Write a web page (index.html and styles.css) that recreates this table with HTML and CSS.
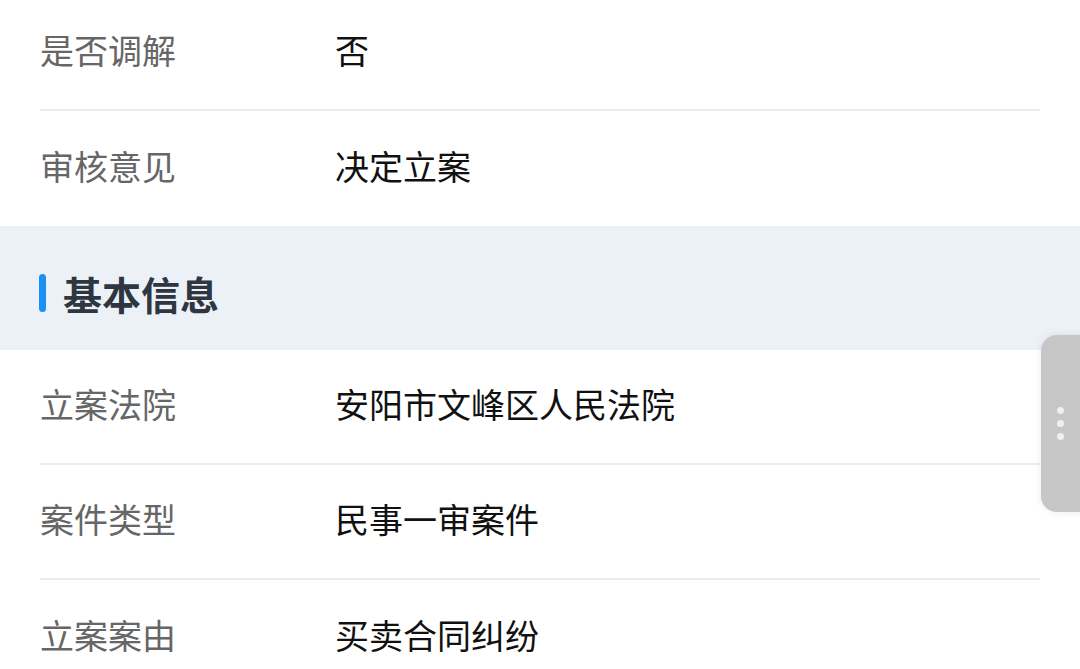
FILE: index.html
```html
<!DOCTYPE html>
<html lang="zh-CN">
<head>
<meta charset="utf-8">
<link rel="stylesheet" href="styles.css">
</head>
<body>
<div class="page">
  <div class="list first">
    <div class="row line"><span class="label">是否调解</span><span class="value">否</span></div>
    <div class="row"><span class="label">审核意见</span><span class="value">决定立案</span></div>
  </div>
  <div class="section"><span class="bar"></span><span class="title">基本信息</span></div>
  <div class="list">
    <div class="row line"><span class="label">立案法院</span><span class="value">安阳市文峰区人民法院</span></div>
    <div class="row line"><span class="label">案件类型</span><span class="value">民事一审案件</span></div>
    <div class="row"><span class="label">立案案由</span><span class="value">买卖合同纠纷</span></div>
  </div>
</div>
<div class="handle"><span class="dot"></span><span class="dot"></span><span class="dot"></span></div>
</body>
</html>
```
FILE: styles.css
```css
html, body {
  margin: 0;
  padding: 0;
  background: #ffffff;
  font-family: "Noto Sans CJK SC", "Noto Sans", sans-serif;
  overflow: hidden;
}
.page {
  width: 1080px;
  height: 669px;
  overflow: hidden;
}
.list {
  padding: 0 40px;
}
.list.first {
  margin-top: -4px;
}
.row {
  height: 115px;
  box-sizing: border-box;
  display: flex;
  align-items: center;
  font-size: 34px;
  padding-bottom: 6px;
}
.row.line {
  border-bottom: 2px solid #ececec;
}
.label {
  width: 295px;
  flex: none;
  color: #666666;
}
.value {
  color: #111111;
}
.section {
  height: 124px;
  background: #ecf1f7;
  display: flex;
  align-items: center;
  padding-left: 39px;
  padding-top: 9px;
  box-sizing: border-box;
}
.bar {
  width: 7px;
  height: 38px;
  border-radius: 4px;
  background: #1890f5;
  margin-right: 17px;
}
.title {
  font-size: 39px;
  font-weight: 700;
  color: #2e3641;
}
.handle {
  position: absolute;
  left: 1041px;
  top: 335px;
  width: 60px;
  height: 177px;
  border-radius: 16px;
  background: #c6c6c6;
  box-shadow: 0 0 8px rgba(0,0,0,0.08);
  display: flex;
  flex-direction: column;
  padding-left: 16px;
  box-sizing: border-box;
  justify-content: center;
  gap: 6px;
}
.dot {
  width: 7px;
  height: 7px;
  border-radius: 50%;
  background: #f0f0f0;
}
```
